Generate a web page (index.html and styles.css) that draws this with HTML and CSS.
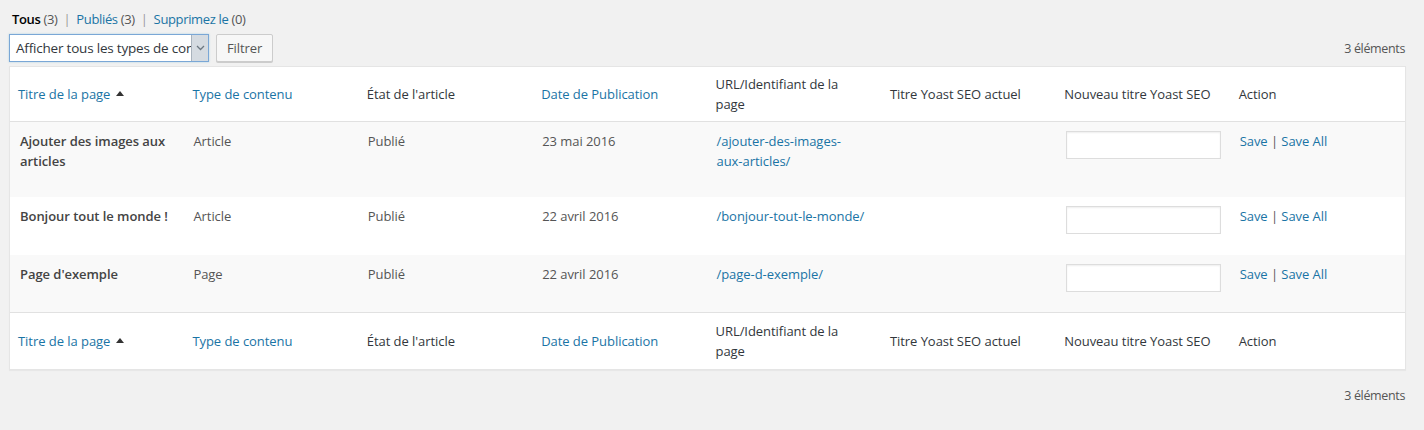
FILE: index.html
```html
<!DOCTYPE html>
<html lang="fr">
<head>
<meta charset="utf-8">
<title>Pages</title>
<link rel="stylesheet" href="styles.css">
</head>
<body>
<div class="wrap">
  <ul class="subsubsub">
    <li class="current">Tous <span class="count">(3)</span></li>
    <li class="sep">|</li>
    <li><a href="#">Publiés</a> <span class="count">(3)</span></li>
    <li class="sep">|</li>
    <li><a href="#">Supprimez le</a> <span class="count">(0)</span></li>
  </ul>

  <div class="tablenav top">
    <div class="actions">
      <div class="select">
        <span class="select-text">Afficher tous les types de contenu</span>
        <span class="select-arrow">
          <svg width="9" height="6" viewBox="0 0 9 6"><path d="M1 1 L4.5 4.5 L8 1" fill="none" stroke="#6d7882" stroke-width="1.3"/></svg>
        </span>
      </div>
      <button class="button">Filtrer</button>
    </div>
    <div class="num">3 éléments</div>
  </div>

  <table class="list">
    <thead>
      <tr class="hrow">
        <th><a href="#">Titre de la page</a><span class="sort"></span></th>
        <th><a href="#">Type de contenu</a></th>
        <th>État de l'article</th>
        <th><a href="#">Date de Publication</a></th>
        <th>URL/Identifiant de la page</th>
        <th>Titre Yoast SEO actuel</th>
        <th>Nouveau titre Yoast SEO</th>
        <th>Action</th>
      </tr>
    </thead>
    <tbody>
      <tr class="alt r1">
        <td class="title">Ajouter des images aux articles</td>
        <td>Article</td>
        <td>Publié</td>
        <td>23 mai 2016</td>
        <td class="url"><a href="#">/ajouter-des-images-aux-articles/</a></td>
        <td></td>
        <td class="inp"><input type="text" class="field"></td>
        <td><a href="#">Save</a> | <a href="#">Save All</a></td>
      </tr>
      <tr class="r2">
        <td class="title">Bonjour tout le monde !</td>
        <td>Article</td>
        <td>Publié</td>
        <td>22 avril 2016</td>
        <td><a href="#" class="nowrap">/bonjour-tout-le-monde/</a></td>
        <td></td>
        <td class="inp"><input type="text" class="field"></td>
        <td><a href="#">Save</a> | <a href="#">Save All</a></td>
      </tr>
      <tr class="alt r3">
        <td class="title">Page d'exemple</td>
        <td>Page</td>
        <td>Publié</td>
        <td>22 avril 2016</td>
        <td><a href="#" class="nowrap">/page-d-exemple/</a></td>
        <td></td>
        <td class="inp"><input type="text" class="field"></td>
        <td><a href="#">Save</a> | <a href="#">Save All</a></td>
      </tr>
    </tbody>
    <tfoot>
      <tr class="frow">
        <th><a href="#">Titre de la page</a><span class="sort"></span></th>
        <th><a href="#">Type de contenu</a></th>
        <th>État de l'article</th>
        <th><a href="#">Date de Publication</a></th>
        <th>URL/Identifiant de la page</th>
        <th>Titre Yoast SEO actuel</th>
        <th>Nouveau titre Yoast SEO</th>
        <th>Action</th>
      </tr>
    </tfoot>
  </table>

  <div class="tablenav bottom">
    <div class="num">3 éléments</div>
  </div>
</div>
</body>
</html>
```

FILE: styles.css
```css
html, body {
  margin: 0;
  padding: 0;
  background: #f1f1f1;
}

body {
  font-family: "Open Sans", "Noto Sans", sans-serif;
  font-size: 13px;
  color: #444;
  letter-spacing: -0.05px;
}

a {
  color: #1a74a5;
  text-decoration: none;
}

.nowrap {
  white-space: nowrap;
}

.wrap {
  padding: 0 18px 0 9px;
}

.subsubsub {
  list-style: none;
  margin: 0;
  padding: 6px 0 0 3px;
  height: 26px;
  line-height: 26px;
  display: flex;
  gap: 6px;
  color: #666;
  letter-spacing: -0.35px;
}

.subsubsub .current {
  color: #000;
  font-weight: 600;
}

.subsubsub .current .count {
  font-weight: 400;
}

.subsubsub .count {
  color: #555;
}

.subsubsub .sep {
  color: #999;
}

.tablenav {
  display: flex;
  justify-content: space-between;
  align-items: center;
  height: 28px;
}

.tablenav.top {
  margin: 2px 0 4px;
}

.tablenav.bottom {
  margin-top: 11px;
  justify-content: flex-end;
}

.actions {
  display: flex;
  gap: 7px;
}

.select {
  box-sizing: border-box;
  width: 200px;
  height: 28px;
  border: 1px solid #7aa7d6;
  background: #fff;
  display: flex;
  align-items: stretch;
  box-shadow: 0 0 2px rgba(30, 140, 190, 0.3);
}

.select-text {
  flex: 1;
  overflow: hidden;
  white-space: nowrap;
  line-height: 26px;
  padding-left: 6px;
  color: #32373c;
  font-size: 13.5px;
  letter-spacing: -0.2px;
}

.select-arrow {
  width: 16px;
  background: #d5dbe1;
  border-left: 1px solid #a9b3bd;
  display: flex;
  align-items: center;
  justify-content: center;
}

.button {
  box-sizing: border-box;
  height: 28px;
  padding: 0 10px;
  border: 1px solid #ccc;
  border-radius: 2px;
  background: #f7f7f7;
  box-shadow: 0 1px 0 #ccc;
  color: #555;
  font-family: inherit;
  font-size: 13px;
  letter-spacing: -0.1px;
}

.num {
  color: #555;
  font-size: 12.5px;
  padding-right: 1px;
  letter-spacing: -0.35px;
}

.list {
  width: 100%;
  table-layout: fixed;
  border-collapse: separate;
  border-spacing: 0;
  background: #fff;
  border: 1px solid #e5e5e5;
  box-shadow: 0 1px 1px rgba(0, 0, 0, 0.04);
}

.list th {
  text-align: left;
  font-weight: 400;
  color: #32373c;
  line-height: 20px;
  padding: 6px 12px 6px 8px;
  vertical-align: middle;
}

.hrow {
  height: 55px;
}

.hrow th {
  border-bottom: 1px solid #e1e1e1;
}

.frow {
  height: 57px;
}

.frow th {
  border-top: 1px solid #e1e1e1;
}

.sort {
  display: inline-block;
  width: 0;
  height: 0;
  margin-left: 6px;
  vertical-align: 3px;
  border-left: 4px solid transparent;
  border-right: 4px solid transparent;
  border-bottom: 5px solid #333;
}

.list td {
  vertical-align: top;
  padding: 10px 9px;
  line-height: 19.5px;
  color: #555;
}

.list td.url {
  padding-right: 19px;
}

.list td.title {
  font-weight: 600;
  color: #444;
  padding-left: 10px;
  padding-right: 12px;
}

.list td.inp {
  padding: 9px 10px 0;
}

.field {
  display: block;
  box-sizing: border-box;
  width: 155px;
  height: 28px;
  margin: 0;
  border: 1px solid #ddd;
  box-shadow: inset 0 1px 2px rgba(0, 0, 0, 0.07);
  background: #fff;
}

.alt {
  background: #f9f9f9;
}

.r1 {
  height: 75px;
}

.r2 {
  height: 58px;
}

.r3 {
  height: 57px;
}
```
